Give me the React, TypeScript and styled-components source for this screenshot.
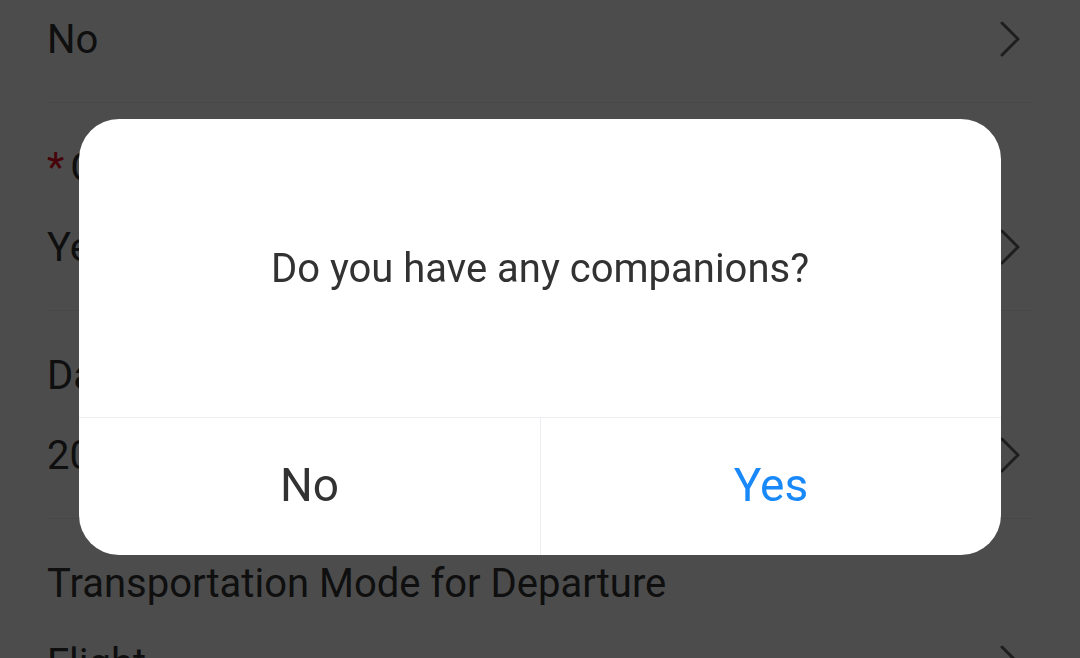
import React from 'react';
import styled, { createGlobalStyle } from 'styled-components';

const GlobalStyle = createGlobalStyle`
  html, body {
    margin: 0;
    padding: 0;
    height: 100%;
    overflow: hidden;
    background: #ffffff;
    font-family: Roboto, "Noto Sans", "Liberation Sans", sans-serif;
  }
`;

const Page = styled.div`
  width: 1080px;
  height: 658px;
  overflow: hidden;
  position: relative;
  background: #ffffff;
`;

const Form = styled.div`
  margin-top: -25px;
  display: flex;
  flex-direction: column;
`;

const Section = styled.div`
  margin: 0 47px;
  padding: 32px 0 31px;
  display: flex;
  flex-direction: column;
  gap: 16px;
  border-bottom: 1px solid #ebedf0;
`;

const Label = styled.div`
  height: 64px;
  display: flex;
  align-items: center;
  font-size: 40px;
  color: #323233;
`;

const Required = styled.span`
  color: #ee0a24;
  margin-right: 6px;
`;

const Value = styled.div`
  height: 64px;
  display: flex;
  align-items: center;
  justify-content: space-between;
  font-size: 40px;
  color: #323233;
  padding-right: 12px;
`;

const Overlay = styled.div`
  position: fixed;
  inset: 0;
  background: rgba(0, 0, 0, 0.7);
  display: flex;
  align-items: center;
  justify-content: center;
  padding-top: 16px;
  box-sizing: border-box;
`;

const Dialog = styled.div`
  width: 922px;
  height: 436px;
  background: #ffffff;
  border-radius: 40px;
  overflow: hidden;
  display: flex;
  flex-direction: column;
`;

const Message = styled.div`
  flex: 1;
  display: flex;
  align-items: center;
  justify-content: center;
  font-size: 40px;
  color: #323233;
`;

const Actions = styled.div`
  height: 137px;
  border-top: 1px solid #ebedf0;
  display: grid;
  grid-template-columns: 1fr 1fr;
`;

const ActionButton = styled.button<{ $primary?: boolean }>`
  border: none;
  background: transparent;
  font-family: inherit;
  font-size: 46px;
  color: ${({ $primary }) => ($primary ? '#1989fa' : '#323233')};
  border-left: ${({ $primary }) => ($primary ? '1px solid #ebedf0' : 'none')};
  padding: 0 0 4px;
  cursor: pointer;
`;

const Chevron = () => (
  <svg width="22" height="38" viewBox="0 0 22 38" fill="none">
    <path d="M3 3 L19 19 L3 35" stroke="#646566" strokeWidth="3" strokeLinecap="round" strokeLinejoin="round" />
  </svg>
);

const rows = [
  { label: '', value: 'No', required: false },
  { label: 'Companions', value: 'Yes', required: true },
  { label: 'Date of Departure', value: '2023-05-12', required: false },
  { label: 'Transportation Mode for Departure', value: 'Flight', required: false },
];

export default function App() {
  return (
    <>
      <GlobalStyle />
      <Page>
        <Form>
          {rows.map((r) => (
            <Section key={r.value}>
              {r.label && (
                <Label>
                  {r.required && <Required>*</Required>}
                  {r.label}
                </Label>
              )}
              <Value>
                {r.value}
                <Chevron />
              </Value>
            </Section>
          ))}
        </Form>
        <Overlay>
          <Dialog>
            <Message>Do you have any companions?</Message>
            <Actions>
              <ActionButton>No</ActionButton>
              <ActionButton $primary>Yes</ActionButton>
            </Actions>
          </Dialog>
        </Overlay>
      </Page>
    </>
  );
}
